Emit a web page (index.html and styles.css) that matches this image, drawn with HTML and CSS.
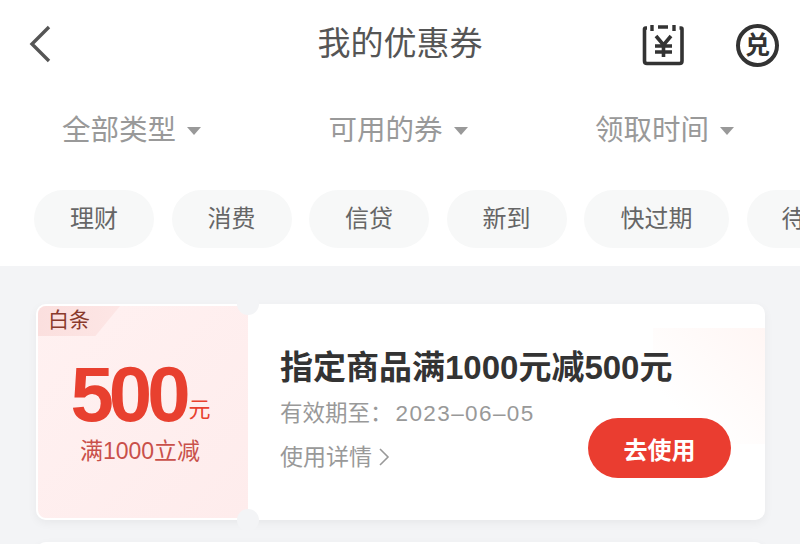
FILE: index.html
```html
<!DOCTYPE html>
<html lang="zh-CN">
<head>
  <meta charset="UTF-8"/>
  <meta name="viewport" content="width=device-width, initial-scale=1.0"/>
  <title>我的优惠券</title>
  <link rel="stylesheet" href="styles.css">
</head>
<body>
  <div class="page">
    <!-- Header -->
    <header class="topbar">
      <svg class="back" width="24" height="38" viewBox="0 0 24 38"><path d="M20 2 L3 19 L20 36" fill="none" stroke="#555" stroke-width="3.4"/></svg>
      <h1 class="title">我的优惠券</h1>
      <div class="top-icons">
        <svg width="44" height="46" viewBox="0 0 44 46">
          <path d="M6 6 H4.5 Q3.5 6 3.5 7 V39 Q3.5 41.5 6 41.5 H38.5 Q41 41.5 41 39 V7 Q41 6 40 6 H38.5" fill="none" stroke="#333" stroke-width="3.6"/>
          <path d="M11 3 V9 M33 3 V9 M17 5 H27" fill="none" stroke="#333" stroke-width="3.4"/>
          <path d="M15 14 L22.5 23 L30 14 M14 24 H31 M14 30 H31 M22.5 23 V35" fill="none" stroke="#333" stroke-width="3.6"/>
        </svg>
        <div class="coin">兑</div>
      </div>
    </header>

    <!-- Filters -->
    <nav class="filters">
      <div class="filter">全部类型<i class="caret"></i></div>
      <div class="filter">可用的券<i class="caret"></i></div>
      <div class="filter">领取时间<i class="caret"></i></div>
    </nav>

    <div class="chips">
      <span class="chip">理财</span>
      <span class="chip">消费</span>
      <span class="chip">信贷</span>
      <span class="chip">新到</span>
      <span class="chip chip-wide">快过期</span>
      <span class="chip chip-last">待</span>
    </div>

    <!-- Coupons -->
    <main class="list">
      <article class="coupon">
        <div class="stub">
          <span class="tag">白条</span>
          <div class="amount">500<small>元</small></div>
          <div class="rule">满1000立减</div>
          <i class="notch notch-top"></i>
          <i class="notch notch-bottom"></i>
        </div>
        <div class="body">
          <div class="watermark"></div>
          <h3 class="name">指定商品满1000元减500元</h3>
          <div class="row">
            <div class="meta">
              <p class="date">有效期至：<span class="date-num">2023–06–05</span></p>
              <p class="detail">使用详情
                <svg width="12" height="20" viewBox="0 0 12 20"><path d="M2 2 L10 10 L2 18" fill="none" stroke="#999" stroke-width="1.6"/></svg>
              </p>
            </div>
            <button class="use">去使用</button>
          </div>
        </div>
      </article>
      <article class="coupon coupon-next"></article>
    </main>
  </div>
</body>
</html>
```

FILE: styles.css
```css
html, body { margin:0; padding:0; height:100%; overflow:hidden }
body { font-family:"Liberation Sans","Noto Sans CJK SC",sans-serif; background:#fff; color:#333 }
.page { width:800px; height:544px; overflow:hidden; display:flex; flex-direction:column }

.topbar { flex:none; height:88px; display:flex; align-items:center; justify-content:center; position:relative; box-sizing:border-box }
.back { position:absolute; left:29px; top:25px }
.title { margin:0; font-size:33px; font-weight:normal; color:#555; line-height:40px }
.top-icons { position:absolute; left:641px; top:22px; display:flex; align-items:center; gap:51px }
.coin { width:35px; height:35px; border:4px solid #333; border-radius:50%; font-size:25px; font-weight:bold; line-height:35px; text-align:center; color:#333 }

.filters { flex:none; height:84px; display:flex; align-items:center; padding-left:62px; box-sizing:border-box }
.filter { width:266.5px; flex:none; font-size:28.5px; line-height:40px; color:#999; display:flex; align-items:center }
.caret { width:0; height:0; margin-left:11px; margin-top:2px; border-left:7px solid transparent; border-right:7px solid transparent; border-top:8px solid #999 }

.chips { flex:none; height:94px; padding:18px 0 0 34px; box-sizing:border-box; display:flex; gap:17.5px; white-space:nowrap }
.chip { flex:none; width:120px; height:58px; border-radius:29px; background:#f7f8f8; font-size:24px; line-height:58px; text-align:center; color:#666 }
.chip-wide { width:145px }
.chip-last { text-align:left; padding-left:35px; box-sizing:border-box }

.list { flex:1; background:#f3f4f6; padding:38px 35px 0 36px; display:flex; flex-direction:column; gap:22px }
.coupon { flex:none; height:216px; display:flex; border-radius:10px; box-shadow:0 3px 10px rgba(0,0,0,0.05) }
.coupon-next { background:#fff }
.stub { width:212px; position:relative; box-sizing:border-box; background:linear-gradient(135deg,#fff1f1,#feecec); border:2px solid #fff; border-right:none; border-radius:10px 0 0 10px; text-align:center }
.tag { position:absolute; left:0; top:0; width:82px; height:30px; padding-left:10px; box-sizing:border-box; background:linear-gradient(90deg,#fbdfde,#fde6e5); clip-path:polygon(0 0,100% 0,70% 100%,0 100%); border-top-left-radius:8px; font-size:21px; line-height:28px; text-align:left; color:#8a3a2c }
.amount { margin-top:46px; padding-right:5px; font-size:78px; font-weight:bold; line-height:84px; letter-spacing:-5px; color:#e8402f }
.amount small { position:relative; top:-4px; font-size:22px; font-weight:normal; letter-spacing:0; margin-left:3px }
.rule { margin-top:-20px; padding-right:6px; font-size:23px; line-height:30px; color:#c9504a }
.notch { position:absolute; right:-11px; width:22px; height:22px; border-radius:50%; background:#f3f4f6; z-index:1 }
.notch-top { top:-13px }
.notch-bottom { bottom:-13px }

.body { flex:1; position:relative; background:#fff; border-radius:0 10px 10px 0; padding:44px 34px 0 32px }
.watermark { position:absolute; right:0; top:24px; width:112px; height:116px; background:linear-gradient(225deg,#fff6f4,#fff 75%) }
.name { position:relative; margin:0; font-size:33px; line-height:40px; font-weight:bold; color:#333; white-space:nowrap }
.row { position:relative; display:flex; justify-content:space-between; align-items:flex-start; margin-top:13px }
.meta p { margin:0; color:#999 }
.date { font-size:22.5px; line-height:26px }
.date-num { margin-left:3px; letter-spacing:1.4px }
.detail { margin-top:16px !important; font-size:23px; line-height:28px; display:flex; align-items:center; gap:6px }
.use { width:143px; height:60px; margin-top:17px; border:none; border-radius:30px; background:#ea3d30; color:#fff; font-family:inherit; font-size:24px; font-weight:bold; padding:0 }
```
